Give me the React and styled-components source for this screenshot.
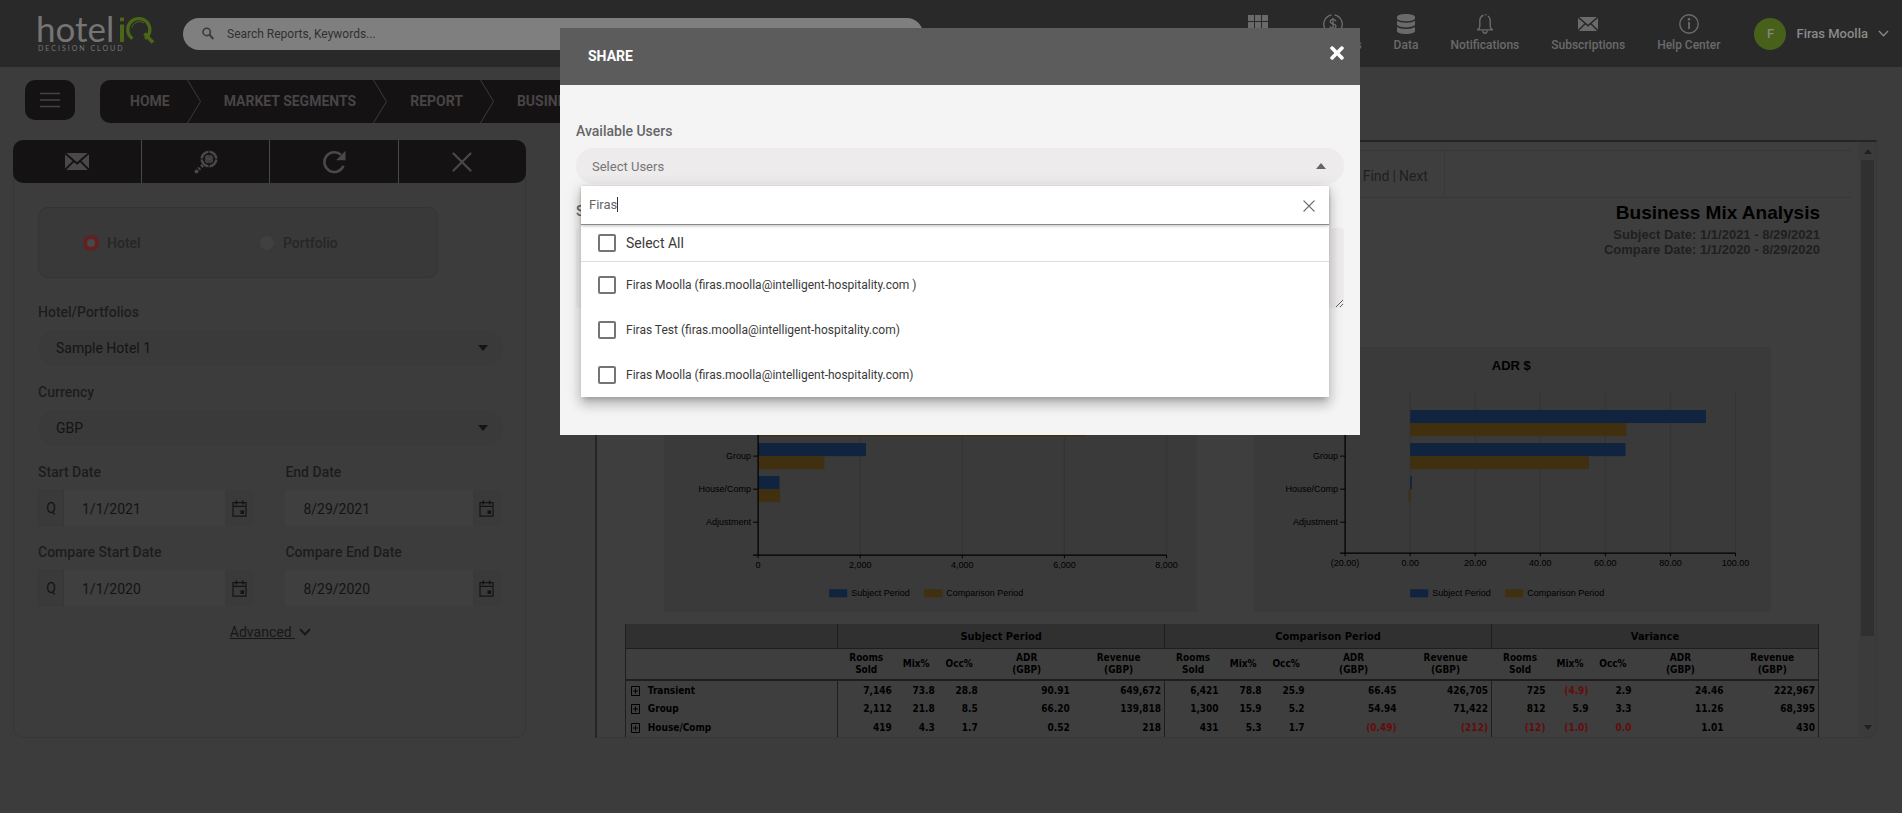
import React, { useState } from "react";
import styled, { createGlobalStyle, css } from "styled-components";
import { FaTimes } from "react-icons/fa";

const GlobalStyle = createGlobalStyle`
  * {
    box-sizing: border-box;
  }
  body {
    margin: 0;
    background: #3c3c3c;
    font-family: Roboto, "Liberation Sans", sans-serif;
    font-size: 14px;
    color: #161616;
  }
  button, input, select, textarea {
    font-family: inherit;
    border: 0;
    outline: none;
    background: none;
    padding: 0;
    margin: 0;
  }
`;

const crumbs = ["HOME", "MARKET SEGMENTS", "REPORT", "BUSINESS MIX ANALYSIS"];

const users = [
  { id: 1, label: "Firas Moolla (firas.moolla@intelligent-hospitality.com )" },
  { id: 2, label: "Firas Test (firas.moolla@intelligent-hospitality.com)" },
  { id: 3, label: "Firas Moolla (firas.moolla@intelligent-hospitality.com)" },
];

const periods = ["Subject Period", "Comparison Period", "Variance"];

const mixRows = [
  {
    name: "Transient",
    cells: [
      "7,146", "73.8", "28.8", "90.91", "649,672",
      "6,421", "78.8", "25.9", "66.45", "426,705",
      "725", "(4.9)", "2.9", "24.46", "222,967",
    ],
  },
  {
    name: "Group",
    cells: [
      "2,112", "21.8", "8.5", "66.20", "139,818",
      "1,300", "15.9", "5.2", "54.94", "71,422",
      "812", "5.9", "3.3", "11.26", "68,395",
    ],
  },
  {
    name: "House/Comp",
    cells: [
      "419", "4.3", "1.7", "0.52", "218",
      "431", "5.3", "1.7", "(0.49)", "(212)",
      "(12)", "(1.0)", "0.0", "1.01", "430",
    ],
  },
];

const isNegative = (value) => value.startsWith("(") || value === "0.0";

// icons
const EnvelopeIcon = ({ width, height }) => (
  <svg width={width} height={height} viewBox="0 0 24 17" fill="currentColor" preserveAspectRatio="none">
    <path d="M1.4 0h21.2L12 9.3z" />
    <path d="M0 1.2 7.6 8 0 15.4z" />
    <path d="M24 1.2 16.4 8 24 15.4z" />
    <path d="M1.2 17 8.8 9.2l3.2 2.6 3.2-2.6 7.6 7.8z" />
  </svg>
);

const GridIcon = () => (
  <svg width="20" height="20" viewBox="0 0 20 20" fill="currentColor">
    {[0, 7, 14].map((x) =>
      [1, 8, 15].map((y) => <rect key={x + "-" + y} x={x} y={y} width="6" height="6" />)
    )}
  </svg>
);

const DollarIcon = () => (
  <svg width="20" height="20" viewBox="0 0 20 20" fill="none" stroke="currentColor" strokeWidth="1.4">
    <path d="M8.4 1A9.2 9.2 0 1 0 11.6 1" />
    <path d="M12.8 7.4C12.6 6 11.5 5.4 10 5.4S7.2 6.200 7.2 7.6c0 3 5.7 1.6 5.7 4.7 0 1.5-1.3 2.3-2.9 2.3s-2.8-.8-3-2.2M10 3.8v12.4" />
  </svg>
);

const DatabaseIcon = () => (
  <svg width="18" height="20" viewBox="0 0 18 20" fill="currentColor">
    <path d="M0 2.8C0 1.2 4 0 9 0s9 1.2 9 2.800v1.6C18 6 14 7.2 9 7.2S0 6 0 4.400z" />
    <path d="M0 6.8c1.7 1.3 5 2 9 2s7.3-.7 9-2v3.8c0 1.6-4 2.8-9 2.8s-9-1.2-9-2.8z" />
    <path d="M0 13c1.7 1.3 5 2 9 2s7.3-.7 9-2v4.2C18 18.8 14 20 9 20s-9-1.2-9-2.8z" />
  </svg>
);

const BellIcon = () => (
  <svg width="18" height="20" viewBox="0 0 18 20" fill="none" stroke="currentColor" strokeWidth="1.4">
    <path d="M7.6 1.3C5 2 3.8 4.3 3.8 7v5.5c0 1.8-1 2.6-2.6 3.4h15.6c-1.6-.8-2.6-1.6-2.6-3.4V7c0-2-.7-3.9-2.2-5M9.2.6l1.3.3" />
    <path d="M6.8 16.5c.2 3.6 4.2 3.6 4.4 0" />
  </svg>
);

const InfoIcon = () => (
  <svg width="20" height="20" viewBox="0 0 20 20" fill="none" stroke="currentColor" strokeWidth="1.4">
    <circle cx="10" cy="10" r="9.2" />
    <path d="M10 8v7" strokeWidth="1.8" />
    <circle cx="10" cy="5.3" r=".7" fill="currentColor" />
  </svg>
);

const SearchIcon = () => (
  <svg width="12" height="13" viewBox="0 0 12 13" fill="none" stroke="#3a3a3a" strokeWidth="1.6">
    <circle cx="4.7" cy="4.9" r="3.7" />
    <path d="m7.4 7.8 4 4.3" strokeWidth="2" />
  </svg>
);

const ScopeIcon = () => (
  <svg width="24" height="24" viewBox="0 0 24 24" fill="none" stroke="currentColor">
    <circle cx="15" cy="9" r="7.3" strokeWidth="2.6" />
    <circle cx="15" cy="9" r="4" strokeWidth="1" fill="#3b3a3a" />
    <path d="M15 0v5.5M15 12.500V18M6 9h5.500M18.500 9H24" stroke="#141213" strokeWidth="1" />
    <path d="m12.300 9.800 1.900-2 1.600 2 1.900-2" strokeWidth="1.3" />
    <path d="m8.800 15.200-1.500 1.500" strokeWidth="3.4" />
    <path d="m5.900 18-1.300 1.300" strokeWidth="3.6" />
    <circle cx="2.5" cy="21.500" r="2" fill="currentColor" stroke="none" />
  </svg>
);

const RefreshIcon = () => (
  <svg width="24" height="24" viewBox="0 0 24 24" fill="none" stroke="currentColor" strokeWidth="2.6">
    <path d="M21.5 15.8A9.900 9.900 0 1 1 19 4.800" />
    <path d="M23.500.8v9.400h-9.400z" fill="currentColor" stroke="none" />
  </svg>
);

const CrossIcon = ({ size, strokeWidth }) => (
  <svg width={size} height={size} viewBox="0 0 20 20" fill="none" stroke="currentColor" strokeWidth={strokeWidth} strokeLinecap="round">
    <path d="m1.5 1.5 17 17M18.5 1.5l-17 17" />
  </svg>
);

const ChevronDown = ({ width, height, strokeWidth }) => (
  <svg width={width} height={height} viewBox="0 0 11 7" fill="none" stroke="currentColor" strokeWidth={strokeWidth}>
    <path d="m1 1 4.5 4.7L10 1" />
  </svg>
);

const CalendarIcon = () => (
  <svg width="15" height="17" viewBox="0 0 15 17" fill="none" stroke="#141414" strokeWidth="1.2">
    <path d="M1 2.6h13v13.6H1zM1 6.3h13" />
    <path d="M4.3.5v4M10.7.5v4" strokeWidth="1.6" />
    <path d="M8.5 10.4h3.6V14H8.5z" fill="#141414" stroke="none" />
  </svg>
);

const Logo = () => (
  <svg width="120" height="50" viewBox="0 0 120 50" role="img" aria-label="hoteliQ Decision Cloud">
    <LogoWord x="-2" y="33">hotel</LogoWord>
    <path d="M82 15.500h4V33h-4zM82 8.500h4v3.800h-4z" fill="#4b6519" />
    <path d="M94.500 29.600A11 11 0 1 1 107 29.700" fill="none" stroke="#4b6519" strokeWidth="3.400" />
    <path d="m106.500 24.500 8.500 9" stroke="#4b6519" strokeWidth="3.600" />
    <path d="M94 18.500a7.800 7.800 0 0 1 12-4.500" fill="none" stroke="#4b6519" strokeWidth="1" />
    <LogoTag x="0" y="42">DECISION CLOUD</LogoTag>
  </svg>
);

function Header() {
  return (
    <TopBar>
      <LogoLink href="#home"><Logo /></LogoLink>
      <SearchBox>
        <SearchIcon />
        <SearchInput aria-label="Search" placeholder="Search Reports, Keywords..." />
      </SearchBox>
      <NavList>
        <NavItem href="#apps"><GridIcon />Apps</NavItem>
        <NavItem href="#currencies"><DollarIcon />Currencies</NavItem>
        <NavItem href="#data"><DatabaseIcon />Data</NavItem>
        <NavItem href="#notifications"><BellIcon />Notifications</NavItem>
        <NavItem href="#subscriptions"><NavMail><EnvelopeIcon width={20} height={14} /></NavMail>Subscriptions</NavItem>
        <NavItem href="#help"><InfoIcon />Help Center</NavItem>
      </NavList>
      <UserButton>
        <Avatar>F</Avatar>
        Firas Moolla
        <ChevronDown width={11} height={7} strokeWidth={1.3} />
      </UserButton>
    </TopBar>
  );
}

function Breadcrumb() {
  return (
    <CrumbRow>
      <MenuButton aria-label="Menu">
        <svg width="20" height="16" viewBox="0 0 20 16" stroke="#454445" strokeWidth="1.6">
          <path d="M0 1.5h20M0 8h20M0 14.5h20" />
        </svg>
      </MenuButton>
      <CrumbBar>
        {crumbs.map((crumb, i) => (
          <React.Fragment key={crumb}>
            {i > 0 && (
              <svg width="14" height="43" viewBox="0 0 14 43" fill="none" stroke="#3c3c3c">
                <path d="M.5 0 13.5 21.5.5 43" />
              </svg>
            )}
            <Crumb href="#crumb">{crumb}</Crumb>
          </React.Fragment>
        ))}
      </CrumbBar>
    </CrumbRow>
  );
}

function DateField({ id, label, value, quick }) {
  return (
    <Field>
      <FieldLabel htmlFor={id}>{label}</FieldLabel>
      <DateBox>
        {quick && <QuickButton>Q</QuickButton>}
        <DateInput id={id} defaultValue={value} />
        <CalendarButton aria-label={"Pick " + label}><CalendarIcon /></CalendarButton>
      </DateBox>
    </Field>
  );
}

function SelectField({ id, label, value }) {
  return (
    <Field>
      <FieldLabel htmlFor={id}>{label}</FieldLabel>
      <SelectWrap>
        <Select id={id} defaultValue={value}>
          <option>{value}</option>
        </Select>
        <Triangle $color="#141414" />
      </SelectWrap>
    </Field>
  );
}

function FilterPanel() {
  return (
    <Panel>
      <Tools>
        <ToolButton aria-label="Share"><EnvelopeIcon width={24} height={17} /></ToolButton>
        <ToolButton aria-label="Run report"><ScopeIcon /></ToolButton>
        <ToolButton aria-label="Refresh"><RefreshIcon /></ToolButton>
        <ToolButton aria-label="Close"><CrossIcon size={20} strokeWidth={2.2} /></ToolButton>
      </Tools>
      <Filters>
        <RadioBox>
          <RadioLabel><Radio name="scope" defaultChecked />Hotel</RadioLabel>
          <RadioLabel><Radio name="scope" />Portfolio</RadioLabel>
        </RadioBox>
        <SelectField id="hotel" label="Hotel/Portfolios" value="Sample Hotel 1" />
        <SelectField id="currency" label="Currency" value="GBP" />
        <DateGrid>
          <DateField id="start" label="Start Date" value="1/1/2021" quick />
          <DateField id="end" label="End Date" value="8/29/2021" />
          <DateField id="cmp-start" label="Compare Start Date" value="1/1/2020" quick />
          <DateField id="cmp-end" label="Compare End Date" value="8/29/2020" />
        </DateGrid>
        <Advanced href="#advanced">
          <span>Advanced&nbsp;</span>
          <ChevronDown width={12} height={8} strokeWidth={1.8} />
        </Advanced>
      </Filters>
    </Panel>
  );
}

// horizontal bar chart, one pair of bars per segment
function BarChart({ title, width, left, zero, step, ticks, tickStep, rows, axisY, titleX, legend }) {
  const scale = (v) => zero + (v / tickStep) * step;
  return (
    <ChartSvg viewBox={`0 0 ${width} 265`} role="img" aria-label={title}>
      <rect width={width} height="265" fill="#3a3a3a" />
      <ChartTitle x={titleX} y="23">{title}</ChartTitle>
      {ticks.map((t, i) => (
        <line key={t} x1={left + i * step} x2={left + i * step} y1="44" y2={axisY} stroke="#343434" />
      ))}
      {rows.map((row, i) => (
        <g key={row.name}>
          <rect x={Math.min(zero, scale(row.subject))} y={63 + i * 33} width={Math.abs(scale(row.subject) - zero)} height="13" fill="#10233f" />
          <rect x={Math.min(zero, scale(row.compare))} y={76 + i * 33} width={Math.abs(scale(row.compare) - zero)} height="13" fill="#41300f" />
          <line x1={left - 5} x2={left} y1={76 + i * 33} y2={76 + i * 33} stroke="#000" />
          <ChartText x={left - 7} y={79 + i * 33} $anchor="end">{row.name}</ChartText>
        </g>
      ))}
      <path d={`M${left} 44V${axisY}M${left - 5} ${axisY}H${left + step * (ticks.length - 1)}`} stroke="#000" strokeWidth="1.2" fill="none" />
      {ticks.map((t, i) => (
        <g key={t}>
          <line x1={left + i * step} x2={left + i * step} y1={axisY} y2={axisY + 3} stroke="#000" />
          <ChartText x={left + i * step} y={axisY + 13} $anchor="middle">{t}</ChartText>
        </g>
      ))}
      <rect x={legend} y="242" width="18" height="8" fill="#10233f" />
      <ChartText x={legend + 22} y="249">Subject Period</ChartText>
      <rect x={legend + 95} y="242" width="18" height="8" fill="#41300f" />
      <ChartText x={legend + 117} y="249">Comparison Period</ChartText>
    </ChartSvg>
  );
}

function MixTable() {
  return (
    <Table>
      <colgroup>
        <NameCol />
        {periods.map((p) => (
          <React.Fragment key={p}>
            <Col $share={57} /><Col $share={43} /><Col $share={43} /><Col $share={92} /><Col $share={92} />
          </React.Fragment>
        ))}
      </colgroup>
      <thead>
        <PeriodRow>
          <th />
          {periods.map((p) => <th key={p} colSpan={5}>{p}</th>)}
        </PeriodRow>
        <MetricRow>
          <th />
          {periods.map((p) => (
            <React.Fragment key={p}>
              <th>Rooms<br />Sold</th>
              <th>Mix%</th>
              <th>Occ%</th>
              <th>ADR<br />(GBP)</th>
              <th>Revenue<br />(GBP)</th>
            </React.Fragment>
          ))}
        </MetricRow>
      </thead>
      <tbody>
        {mixRows.map((row) => (
          <tr key={row.name}>
            <NameCell>
              <Expand aria-label={"Expand " + row.name}>
                <svg width="9" height="10" viewBox="0 0 9 10" fill="none" stroke="#000">
                  <path d="M.5.5h8v9h-8zM2 5h5M4.5 2.5v5" />
                </svg>
              </Expand>
              {row.name}
            </NameCell>
            {row.cells.map((cell, i) => (
              <NumCell key={i} $last={i % 5 === 4} $red={isNegative(cell)}>{cell}</NumCell>
            ))}
          </tr>
        ))}
      </tbody>
    </Table>
  );
}

function Report() {
  return (
    <ReportFrame>
      <ReportPage>
        <ReportTools>
          <FindLinks>
            <a href="#find">Find</a> | <a href="#next">Next</a>
          </FindLinks>
        </ReportTools>
        <ReportTitle>
          <h1>Business Mix Analysis</h1>
          <p>Subject Date: 1/1/2021 - 8/29/2021</p>
          <p>Compare Date: 1/1/2020 - 8/29/2020</p>
        </ReportTitle>
        <Charts>
          <BarChart
            title="Rooms Sold"
            width={533}
            titleX={266}
            left={94}
            zero={94}
            step={102}
            tickStep={2000}
            axisY={208}
            legend={165}
            ticks={["0", "2,000", "4,000", "6,000", "8,000"]}
            rows={[
              { name: "Transient", subject: 7146, compare: 6421 },
              { name: "Group", subject: 2112, compare: 1300 },
              { name: "House/Comp", subject: 419, compare: 431 },
              { name: "Adjustment", subject: 0, compare: 0 },
            ]}
          />
          <BarChart
            title="ADR $"
            width={516}
            titleX={257}
            left={91}
            zero={156}
            step={65}
            tickStep={20}
            axisY={206}
            legend={156}
            ticks={["(20.00)", "0.00", "20.00", "40.00", "60.00", "80.00", "100.00"]}
            rows={[
              { name: "Transient", subject: 90.91, compare: 66.45 },
              { name: "Group", subject: 66.2, compare: 54.94 },
              { name: "House/Comp", subject: 0.52, compare: -0.49 },
              { name: "Adjustment", subject: 0, compare: 0 },
            ]}
          />
        </Charts>
        <MixTable />
      </ReportPage>
      <ScrollTrack>
        <Triangle $color="#202020" $up $small />
        <ScrollThumb />
        <Triangle $color="#202020" $small />
      </ScrollTrack>
    </ReportFrame>
  );
}

function ShareModal() {
  const [query, setQuery] = useState("Firas");

  return (
    <Backdrop>
      <Modal role="dialog" aria-label="Share">
        <ModalHeader>
          <h2>SHARE</h2>
          <ModalClose aria-label="Close"><FaTimes size={20} /></ModalClose>
        </ModalHeader>
        <ModalBody>
          <ModalLabel as="div">Available Users</ModalLabel>
          <UserSelect>
            <UserTrigger aria-expanded="true">
              Select Users
              <Triangle $color="#666" $up />
            </UserTrigger>
            <Dropdown>
              <FilterRow>
                <FilterInput aria-label="Filter users" value={query} onChange={(e) => setQuery(e.target.value)} />
                <Caret />
                <ClearButton aria-label="Clear" onClick={() => setQuery("")}>
                  <CrossIcon size={12} strokeWidth={2} />
                </ClearButton>
              </FilterRow>
              <SelectAll><Check />Select All</SelectAll>
              {users.map((user) => (
                <UserOption key={user.id}><Check />{user.label}</UserOption>
              ))}
            </Dropdown>
          </UserSelect>
          <ModalLabel htmlFor="subject">Subject</ModalLabel>
          <Message id="subject" />
        </ModalBody>
      </Modal>
    </Backdrop>
  );
}

function App() {
  return (
    <>
      <GlobalStyle />
      <Header />
      <Breadcrumb />
      <Main>
        <FilterPanel />
        <Report />
      </Main>
      <ShareModal />
    </>
  );
}

const TopBar = styled.header`
  display: flex;
  align-items: center;
  height: 67px;
  padding: 0 13px 0 38px;
  background: #292929;
  color: #757575;
`;

const LogoLink = styled.a`
  display: flex;
  width: 145px;
`;

const LogoWord = styled.text`
  font-family: Lato, sans-serif;
  font-size: 35px;
  fill: #757575;
`;

const LogoTag = styled.text`
  font-family: Lato, sans-serif;
  font-size: 7px;
  letter-spacing: 2px;
  fill: #757575;
`;

const SearchBox = styled.label`
  display: flex;
  align-items: center;
  gap: 13px;
  flex: 0 1 740px;
  height: 32px;
  padding: 0 19px;
  border-radius: 16px;
  background: #7f7f7f;
`;

const SearchInput = styled.input`
  flex: 1;
  font-size: 12px;
  color: #303030;
  &::placeholder {
    color: #303030;
    opacity: 1;
  }
`;

const NavList = styled.nav`
  display: flex;
  gap: 32px;
  margin-left: auto;
`;

const NavItem = styled.a`
  display: flex;
  flex-direction: column;
  align-items: center;
  gap: 3px;
  font-size: 12px;
  font-weight: 500;
  line-height: 16px;
  color: #6a6a6a;
  text-decoration: none;
`;

const NavMail = styled.span`
  display: flex;
  align-items: center;
  height: 20px;
`;

const UserButton = styled.button`
  display: flex;
  align-items: center;
  gap: 10px;
  margin-left: 34px;
  font-size: 13px;
  font-weight: 500;
  color: #8a8a8a;
`;

const Avatar = styled.span`
  display: flex;
  align-items: center;
  justify-content: center;
  width: 32px;
  height: 32px;
  border-radius: 50%;
  background: #48611a;
  color: #858585;
`;

const CrumbRow = styled.div`
  display: flex;
  align-items: flex-start;
  gap: 25px;
  padding: 13px 25px 17px;
`;

const MenuButton = styled.button`
  display: flex;
  align-items: center;
  justify-content: center;
  width: 50px;
  height: 40px;
  border-radius: 10px;
  background: #141213;
`;

const CrumbBar = styled.nav`
  display: flex;
  align-items: center;
  height: 43px;
  padding-left: 7px;
  border-radius: 10px;
  overflow: hidden;
  background: #141213;
`;

const Crumb = styled.a`
  padding: 0 17px 2px 23px;
  font-size: 14px;
  font-weight: 700;
  color: #474546;
  text-decoration: none;
`;

const Main = styled.main`
  display: grid;
  grid-template-columns: minmax(0, 2fr) minmax(0, 5fr);
  gap: 69px;
  height: calc(100vh - 215px);
  min-height: 520px;
  padding: 0 25px 0 13px;
`;

const Panel = styled.section`
  border: 1px solid #363636;
  border-radius: 10px;
`;

const Tools = styled.div`
  display: grid;
  grid-template-columns: repeat(4, 1fr);
  height: 43px;
  margin: -1px -1px 0;
  border-radius: 10px;
  overflow: hidden;
  background: #141213;
`;

const ToolButton = styled.button`
  display: flex;
  align-items: center;
  justify-content: center;
  color: #4a494a;
  & + & {
    border-left: 1px solid #4a494a;
  }
`;

const Filters = styled.div`
  display: flex;
  flex-direction: column;
  gap: 17px;
  padding: 24px 22px 0 24px;
`;

const RadioBox = styled.div`
  display: grid;
  grid-template-columns: 176px auto;
  align-items: center;
  width: 86%;
  height: 71px;
  margin-bottom: 8px;
  padding-left: 44px;
  border: 1px solid #343434;
  border-radius: 10px;
  background: #393939;
`;

const RadioLabel = styled.label`
  display: flex;
  align-items: center;
  gap: 8px;
  font-weight: 500;
  color: #262626;
`;

const Radio = styled.input.attrs({ type: "radio" })`
  appearance: none;
  width: 16px;
  height: 16px;
  border-radius: 50%;
  border: 1px solid #393939;
  background: #404040;
  &:checked {
    border: 4px solid #622020;
    background: #484848;
  }
`;

const Field = styled.div`
  display: flex;
  flex-direction: column;
  gap: 9px;
`;

const FieldLabel = styled.label`
  font-weight: 500;
  line-height: 18px;
  color: #1c1c1c;
`;

const SelectWrap = styled.div`
  display: flex;
  align-items: center;
  height: 36px;
  padding-right: 15px;
  border-radius: 18px;
  background: #3a3a3a;
`;

const Select = styled.select`
  appearance: none;
  flex: 1;
  height: 36px;
  padding-left: 18px;
  font-size: 14px;
  color: #141414;
`;

const Triangle = styled.i`
  width: 0;
  height: 0;
  border: ${(props) => (props.$small ? 4 : 5)}px solid transparent;
  ${(props) =>
    props.$up
      ? css`
          border-top: 0;
          border-bottom: ${props.$small ? 5 : 6}px solid ${props.$color};
        `
      : css`
          border-bottom: 0;
          border-top: ${props.$small ? 5 : 6}px solid ${props.$color};
        `}
`;

const DateGrid = styled.div`
  display: grid;
  grid-template-columns: repeat(2, minmax(0, 1fr));
  gap: 17px 32px;
  padding-right: 2px;
`;

const DateBox = styled.div`
  display: flex;
  height: 36px;
  background: #3a3a3a;
`;

const QuickButton = styled.button`
  width: 26px;
  border: 1px solid #373737;
  font-size: 14px;
  color: #141414;
`;

const DateInput = styled.input`
  flex: 1;
  min-width: 0;
  padding: 2px 0 0 18px;
  background: #3f3f3f;
  font-size: 14px;
  color: #141414;
`;

const CalendarButton = styled.button`
  display: flex;
  align-items: center;
  justify-content: center;
  width: 28px;
`;

const Advanced = styled.a`
  display: flex;
  align-items: center;
  align-self: center;
  gap: 4px;
  padding-top: 1px;
  color: #171717;
  text-decoration: none;
  span {
    text-decoration: underline;
  }
`;

const ReportFrame = styled.section`
  display: flex;
  overflow: hidden;
  border: 1px solid #373737;
  border-top: 2px solid #252525;
  border-left: 2px solid #252525;
  border-radius: 0 0 10px 0;
`;

const ReportPage = styled.div`
  flex: 1;
  min-width: 0;
  padding: 8px 8px 0 0;
  background: #3e3e3e;
`;

const ReportTools = styled.div`
  display: flex;
  height: 48px;
  border: 1px solid #373737;
  border-width: 1px 0;
`;

const FindLinks = styled.div`
  display: flex;
  align-items: center;
  justify-content: flex-end;
  gap: 3px;
  width: 848px;
  padding: 4px 16px 0 0;
  border-right: 1px solid #373737;
  color: #1f1f1f;
  a {
    color: inherit;
    text-decoration: none;
  }
`;

const ReportTitle = styled.div`
  height: 149px;
  padding: 4px 31px 0;
  text-align: right;
  font-family: "Liberation Sans", Arial, sans-serif;
  h1 {
    margin: 0 0 3px;
    font-size: 19px;
    line-height: 22px;
    color: #000;
  }
  p {
    margin: 0;
    font-size: 13px;
    font-weight: 700;
    line-height: 15px;
    color: #1f1f1f;
  }
`;

const Charts = styled.div`
  display: grid;
  grid-template-columns: 533fr 516fr;
  gap: 57px;
  padding: 0 80px 0 67px;
`;

const ChartSvg = styled.svg`
  display: block;
  width: 100%;
`;

const ChartText = styled.text`
  font-family: "Liberation Sans", Arial, sans-serif;
  font-size: 9px;
  text-anchor: ${(props) => props.$anchor || "start"};
  fill: #000;
`;

const ChartTitle = styled(ChartText)`
  font-size: 13px;
  font-weight: 700;
  text-anchor: middle;
`;

const Table = styled.table`
  table-layout: fixed;
  width: calc(100% - 60px);
  margin: 12px 30px 0 28px;
  border-collapse: collapse;
  font-family: "DejaVu Sans Condensed", "Open Sans", sans-serif;
  font-size: 10px;
  font-weight: 700;
  color: #000;
`;

const NameCol = styled.col`
  width: 17.8%;
`;

const Col = styled.col`
  width: calc(82.2% * ${(props) => props.$share} / 981);
`;

const PeriodRow = styled.tr`
  height: 24px;
  background: #303030;
  th {
    padding: 0;
    border: 1px solid #1e1e1e;
    border-top: 0;
    font-size: 11px;
  }
`;

const MetricRow = styled.tr`
  height: 32px;
  border: 1px solid #1e1e1e;
  border-bottom: 2px solid #1e1e1e;
  th {
    padding: 0;
    font-size: 10px;
    line-height: 12px;
  }
`;

const NameCell = styled.td`
  height: 19px;
  padding: 0 0 0 5px;
  border: 1px solid #1e1e1e;
  border-width: 0 1px;
`;

const NumCell = styled.td`
  padding: 0 3px 0 0;
  text-align: right;
  color: ${(props) => (props.$red ? "#640c0c" : "#000")};
  border-right: ${(props) => (props.$last ? "1px solid #1e1e1e" : "0")};
`;

const Expand = styled.button`
  margin-right: 8px;
  vertical-align: middle;
  svg {
    display: block;
  }
`;

const ScrollTrack = styled.div`
  display: flex;
  flex-direction: column;
  align-items: center;
  gap: 6px;
  width: 17px;
  padding: 7px 2px;
  background: #3b3b3b;
`;

const ScrollThumb = styled.div`
  width: 100%;
  height: 82%;
  margin-bottom: auto;
  background: #303030;
`;

const Backdrop = styled.div`
  position: fixed;
  inset: 0;
  display: flex;
  justify-content: center;
  align-items: flex-start;
  padding: 28px 0 0 18px;
`;

const Modal = styled.div`
  width: 800px;
  max-width: 100%;
  background: #f4f4f4;
`;

const ModalHeader = styled.header`
  display: flex;
  align-items: center;
  justify-content: space-between;
  height: 57px;
  padding: 0 13px 2px 28px;
  background: #5c5c5c;
  color: #fff;
  h2 {
    margin: 0;
    font-size: 14px;
    font-weight: 700;
  }
`;

const ModalClose = styled.button`
  display: flex;
  margin-bottom: 6px;
  color: #fff;
`;

const ModalBody = styled.div`
  display: flex;
  flex-direction: column;
  padding: 37px 16px 127px;
`;

const ModalLabel = styled.label`
  margin-bottom: 8px;
  font-size: 14px;
  font-weight: 500;
  line-height: 18px;
  color: #666;
`;

const UserSelect = styled.div`
  position: relative;
  margin-bottom: 18px;
`;

const UserTrigger = styled.button`
  display: flex;
  align-items: center;
  justify-content: space-between;
  width: 100%;
  height: 36px;
  padding: 0 18px 0 16px;
  border-radius: 18px;
  background: #edebec;
  font-size: 13px;
  color: #757575;
`;

const Dropdown = styled.div`
  position: absolute;
  top: 38px;
  left: 5px;
  right: 15px;
  background: #fff;
  box-shadow: 0 5px 5px -3px rgba(0, 0, 0, 0.2), 0 8px 10px 1px rgba(0, 0, 0, 0.14),
    0 3px 14px 2px rgba(0, 0, 0, 0.12);
`;

const FilterRow = styled.div`
  display: flex;
  align-items: center;
  height: 39px;
  padding: 0 14px 2px 8px;
  border-bottom: 1px solid #8a8a8a;
  box-shadow: 0 1px 3px rgba(0, 0, 0, 0.25);
`;

const FilterInput = styled.input`
  field-sizing: content;
  font-size: 13px;
  color: #666;
`;

const Caret = styled.i`
  width: 1px;
  height: 15px;
  background: #333;
`;

const ClearButton = styled.button`
  display: flex;
  margin-left: auto;
  padding-top: 3px;
  color: #666;
`;

const UserOption = styled.label`
  display: flex;
  align-items: center;
  gap: 10px;
  height: 45px;
  padding-left: 17px;
  font-size: 12px;
  color: #3a3a3a;
`;

const SelectAll = styled(UserOption)`
  height: 37px;
  padding-bottom: 1px;
  border-bottom: 1px solid #ddd;
  font-size: 14px;
`;

const Check = styled.input.attrs({ type: "checkbox" })`
  appearance: none;
  width: 18px;
  height: 18px;
  border: 2px solid #757575;
  border-radius: 2px;
  &:checked {
    background: #757575;
  }
`;

const Message = styled.textarea`
  height: 80px;
  border-radius: 4px;
  background: #edebec;
  resize: vertical;
`;

export default App;
